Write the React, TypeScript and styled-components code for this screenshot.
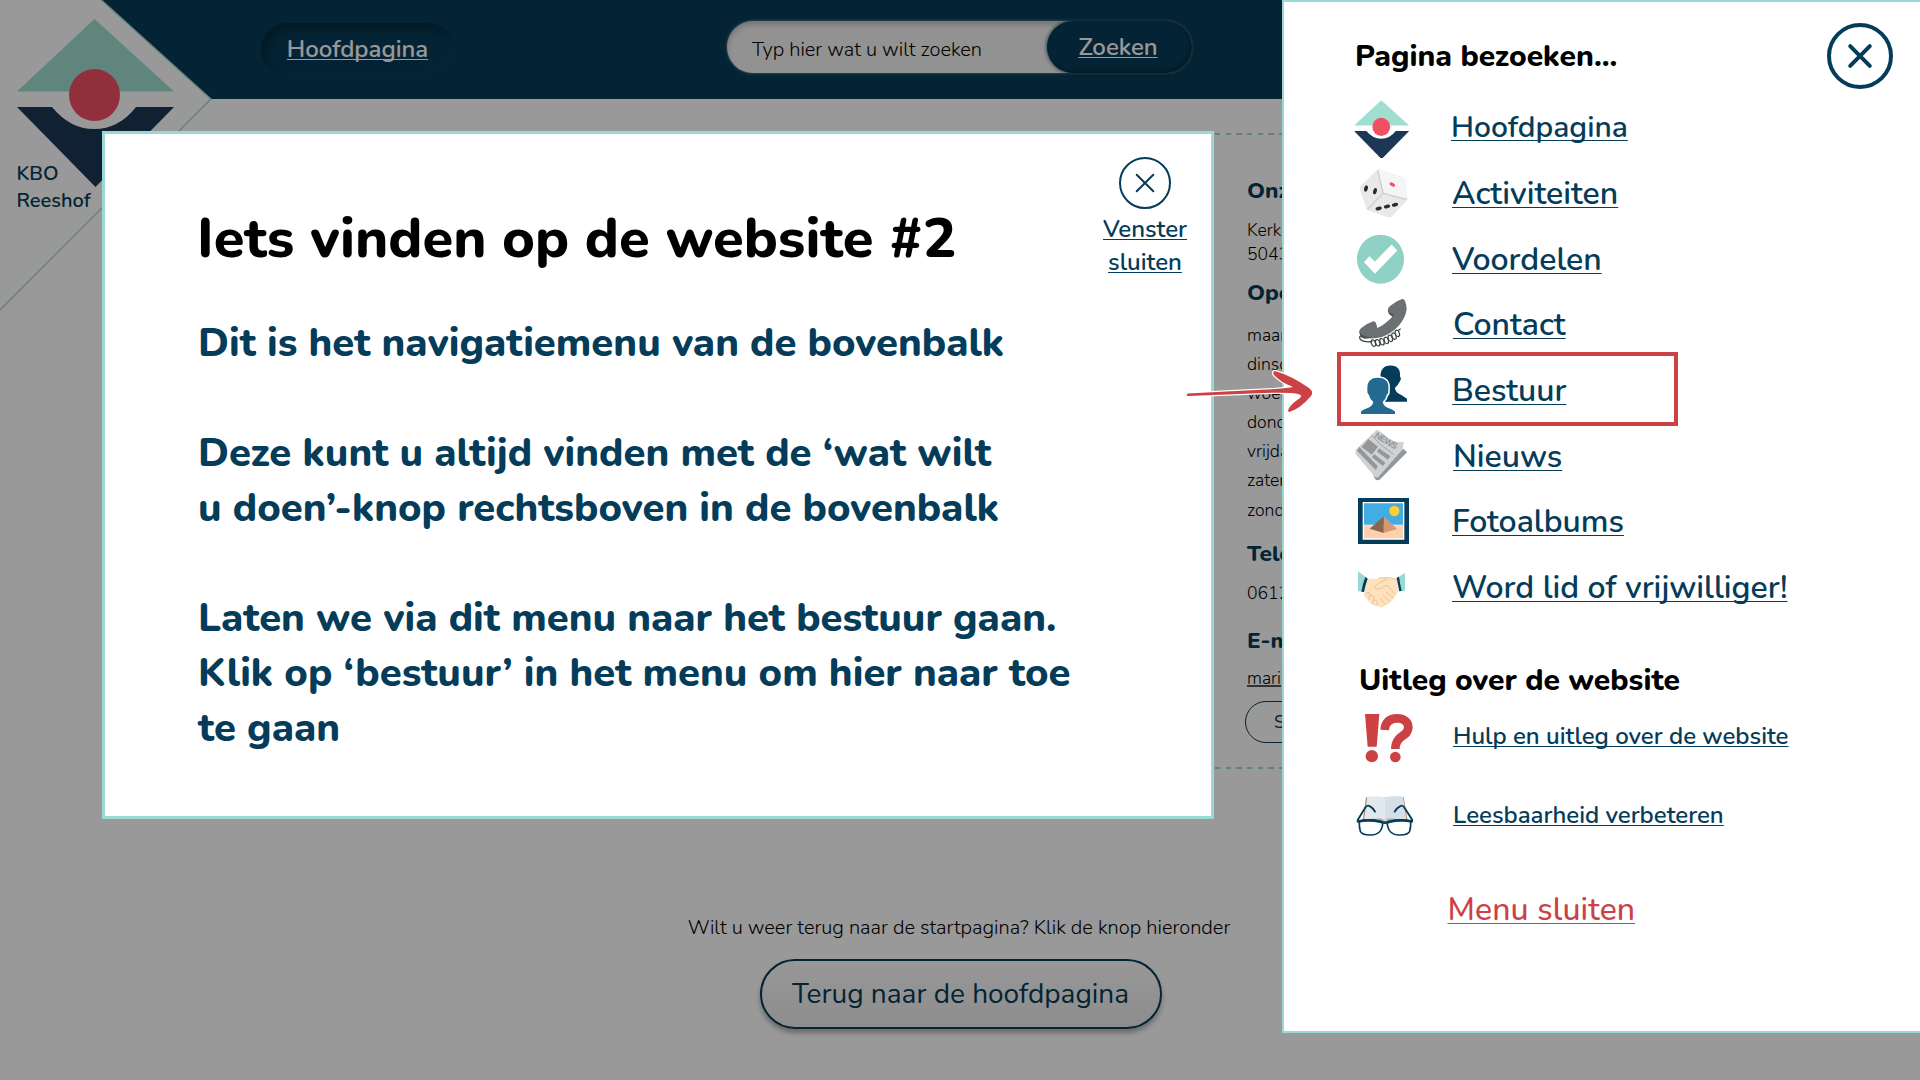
import React from "react";
import styled, { createGlobalStyle } from "styled-components";

const navy = "#043c5a";
const teal = "#9ad8d3";
const red = "#cc4244";

const GlobalStyle = createGlobalStyle`
  *, *::before, *::after { box-sizing: border-box; }
  body { margin: 0; background: #fff; overflow: hidden; }
  h1, h2, h3, p, ul { margin: 0; padding: 0; }
  ul { list-style: none; }
  button { border: 0; background: none; padding: 0; font: inherit; color: inherit; }
`;

const Screen = styled.div`
  position: relative;
  width: 1920px;
  height: 1080px;
  overflow: hidden;
  background: #fff;
  font-family: "Nunito", "Lato", sans-serif;
  color: #000;
`;

const Underlined = styled.a`
  text-decoration: underline;
  text-decoration-thickness: 1px;
  text-underline-offset: 2px;
  text-decoration-skip-ink: none;
  cursor: pointer;
`;

/* ---------- page behind the overlay ---------- */

const Header = styled.header`
  display: flex;
  height: 99px;
  padding-left: 261px;
  background: #073b57;
`;

const HomePill = styled(Underlined)`
  display: flex;
  align-items: center;
  justify-content: center;
  width: 193px;
  height: 52px;
  margin-top: 23px;
  border-radius: 26px;
  color: #fff;
  font-size: 24px;
  font-weight: 600;
  box-shadow: inset 6px 6px 10px #052b40, inset -6px -6px 10px #084160;
`;

const Search = styled.div`
  display: flex;
  width: 465px;
  height: 52px;
  margin: 21px 0 0 273px;
  border-radius: 26px;
  background: #f3f3f3;
  box-shadow: inset 0 4px 5px rgba(0, 0, 0, 0.18), 0 0 3px 0 rgba(255, 255, 255, 0.55);
`;

const SearchHint = styled.span`
  flex: 1;
  padding: 15px 0 0 25px;
  font-size: 20px;
  font-weight: 300;
  line-height: 27px;
`;

const SearchButton = styled.button`
  width: 145px;
  padding-right: 3px;
  border-radius: 26px;
  background: #073b57;
  color: #fff;
  font-size: 24px;
  font-weight: 600;
  box-shadow: inset -2px -2px 4px rgba(0, 0, 0, 0.25), 0 0 4px #073b57;
`;

const Corner = styled.div`
  position: absolute;
  left: 0;
  top: 0;
  width: 212px;
  height: 312px;
  svg { display: block; }
`;

const CornerName = styled.div`
  position: absolute;
  left: 16.5px;
  top: 160px;
  color: #073b57;
  font-size: 20px;
  font-weight: 600;
  line-height: 27px;
`;

const Card = styled.section`
  width: 1202px;
  height: 636px;
  margin: 34px 0 0 359px;
  padding: 41px 0 0 888px;
  --dash: repeating-linear-gradient(90deg, ${teal} 0 5.3px, transparent 5.3px 10.7px);
  background: var(--dash) top / 100% 2px no-repeat, var(--dash) bottom / 100% 2px no-repeat;
`;

const CardTitle = styled.h3<{ $top?: number }>`
  margin-top: ${p => p.$top ?? 0}px;
  color: #073b57;
  font-size: 22.6px;
  font-weight: 800;
  line-height: 33px;
`;

const CardText = styled.p<{ $top: number; $line?: number }>`
  margin-top: ${p => p.$top}px;
  font-size: 17.6px;
  font-weight: 300;
  line-height: ${p => p.$line ?? 24}px;
`;

const MailLink = styled(Underlined)`
  text-decoration-thickness: 2px;
  text-decoration-color: #555;
  text-underline-offset: 1px;
`;

const CardButton = styled.button`
  display: block;
  width: 190px;
  height: 42px;
  margin: 11.5px 0 0 -2px;
  padding-left: 28px;
  border: 1px solid #073b57;
  border-radius: 21px;
  color: #073b57;
  font-size: 18px;
  font-weight: 400;
  text-align: left;
`;

const Footer = styled.footer`
  display: flex;
  flex-direction: column;
  align-items: center;
  margin-top: 144.5px;
  padding-right: 2px;
  font-size: 20px;
  font-weight: 300;
  line-height: 27px;
`;

const BackButton = styled.button`
  width: 402px;
  height: 70px;
  margin: 18.5px 0 0 3px;
  border: 2px solid #073b57;
  border-radius: 35px;
  background: linear-gradient(#fdfdfd, #ebebeb);
  color: #073b57;
  font-size: 28px;
  font-weight: 400;
  box-shadow: 0 4px 5px rgba(0, 0, 0, 0.3);
`;

const Dim = styled.div`
  position: absolute;
  inset: 0;
  background: rgba(0, 0, 0, 0.4);
`;

/* ---------- dialog ---------- */

const Dialog = styled.section`
  position: absolute;
  left: 102px;
  top: 131px;
  display: flex;
  justify-content: space-between;
  width: 1112px;
  height: 688px;
  padding: 23px 22px 0 92px;
  border: 3px solid ${teal};
  background: #fff;
`;

const DialogBody = styled.div`
  padding-top: 44px;
  color: ${navy};
  font-size: 40px;
  font-weight: 800;
  line-height: 55px;
  p { margin: 0 0 55px 1px; white-space: nowrap; }
`;

const DialogTitle = styled.h1`
  margin-bottom: 39px;
  color: #000;
  font-size: 56px;
  font-weight: 800;
  line-height: 76px;
`;

const CloseLink = styled.a`
  display: flex;
  flex-direction: column;
  align-items: center;
  width: 88px;
  color: ${navy};
  font-size: 24px;
  font-weight: 600;
  line-height: 33px;
  cursor: pointer;
  svg { margin-bottom: 4px; }
`;

/* ---------- drawer ---------- */

const Drawer = styled.nav`
  position: absolute;
  left: 1282px;
  top: 0;
  width: 641px;
  height: 1033px;
  padding: 0 0 0 69px;
  border: 2px solid ${teal};
  background: #fff;
`;

const DrawerTop = styled.div`
  display: flex;
  justify-content: space-between;
  height: 93px;
  padding: 21px 28px 0 0;
`;

const DrawerTitle = styled.h2<{ $top: number; $left: number }>`
  margin: ${p => p.$top}px 0 0 ${p => p.$left}px;
  font-size: 30px;
  font-weight: 800;
  line-height: 41px;
`;

const PageList = styled.ul`
  display: grid;
  grid-auto-rows: 65.7px;
`;

const HelpList = styled.ul`
  display: grid;
  grid-auto-rows: 71px;
  row-gap: 8.3px;
`;

const Item = styled.li`
  display: grid;
  grid-template-columns: 99px auto;
  align-items: center;
  color: ${navy};
`;

const ItemLink = styled(Underlined)<{ $size: number; $nudge?: number }>`
  justify-self: start;
  margin-left: ${p => p.$nudge ?? 0}px;
  font-size: ${p => p.$size}px;
  font-weight: 600;
  white-space: nowrap;
  text-underline-offset: ${p => (p.$size > 24 ? 3 : 2)}px;
`;

const CloseMenu = styled(Underlined)`
  display: inline-block;
  margin: 37px 0 0 94.5px;
  color: ${red};
  font-size: 32px;
  font-weight: 500;
  line-height: 44px;
  letter-spacing: 0.08px;
  text-underline-offset: 3px;
`;

const Highlight = styled.div`
  position: absolute;
  left: 1337px;
  top: 352px;
  width: 341px;
  height: 74px;
  border: 4px solid ${red};
`;

const Arrow = styled.svg`
  position: absolute;
  left: 1180px;
  top: 360px;
`;

/* ---------- icons ---------- */

const Glyph = ({ y, children }: { y: number; children: React.ReactNode }) => (
  <svg width="60" height="60" viewBox={`99 ${y} 180 180`}>{children}</svg>
);

const Logo = () => (
  <>
    <path d="M94.5 19 174 91.5H17Z" fill="#a0ded0" />
    <path d="M17 107H52Q70 129 94 129Q119 129 136 107H174L95.5 187Z" fill="#1b3755" />
    <ellipse cx="94.5" cy="95" rx="25.5" ry="26" fill="#f34f64" />
  </>
);

const SmallLogo = () => (
  <svg width="60" height="60" viewBox="0 0 60 60">
    <g transform="translate(-4.9 -4.5) scale(.351)"><Logo /></g>
  </svg>
);

const Dice = () => (
  <Glyph y={220.5}>
    <path d="M172 238Q176 236 181 238L249 261Q255 263 256 269L262 322Q262 328 257 333L217 377Q211 382 204 380L149 362Q142 360 139 353L120 298Q118 291 123 285Z" fill="#e9e9e9" />
    <path d="M173 238Q176 236 181 238L249 261Q255 263 256 269L261 324L190 308Z" fill="#f5f5f5" />
    <path d="M173 239 189 308 142 357M190 309 261 327" fill="none" stroke="#d3d3d3" strokeWidth="5" strokeLinejoin="round" />
    <ellipse cx="217" cy="282" rx="9" ry="5.5" transform="rotate(30 217 282)" fill="#f34f64" />
    <g fill="#2c2c2c">
      <ellipse cx="138" cy="294" rx="5.5" ry="9.5" transform="rotate(14 138 294)" />
      <ellipse cx="165" cy="302" rx="5.5" ry="9.5" transform="rotate(14 165 302)" />
      <ellipse cx="176" cy="354" rx="9.5" ry="5.5" transform="rotate(-14 176 354)" />
      <ellipse cx="201" cy="348" rx="9.5" ry="5.5" transform="rotate(-14 201 348)" />
      <ellipse cx="225" cy="343" rx="9.5" ry="5.5" transform="rotate(-14 225 343)" />
    </g>
  </Glyph>
);

const Check = () => (
  <Glyph y={417.6}>
    <ellipse cx="181.5" cy="508" rx="70.5" ry="73.5" fill="#8fd1c5" />
    <path d="M132 517 148 499 165 515 215 464 232 482 165 552Z" fill="#fff" />
  </Glyph>
);

const Phone = () => (
  <Glyph y={614.7}>
    <path d="M118 728Q116 719 126 712Q142 699 158 694Q165 692 168 699L172 714Q194 704 221 676L204 664Q201 655 212 646Q229 632 247 627Q252 626 255 633Q260 645 260 658Q256 684 236 707Q209 738 170 744Q126 749 118 728Z" fill="#6b7073" />
    <path d="M118 724Q128 743 156 740Q136 752 121 740ZM204 658Q206 668 223 674L218 681L206 671Z" fill="#4b5054" />
    <path d="M120 738Q116 749 130 753Q144 757 157 754" fill="none" stroke="#3c4144" strokeWidth="4" />
    <g fill="none" stroke="#3c4144" strokeWidth="3.5">
      {[[160, 759], [173, 758], [186, 755], [199, 751], [211, 745], [222, 738], [232, 730]].map(([x, y]) => (
        <ellipse key={x} cx={x} cy={y} rx="6" ry="10" transform={`rotate(-20 ${x} ${y})`} />
      ))}
      <path d="M234 722 242 716" />
    </g>
  </Glyph>
);

const bust = "M123 221V213Q128 208 143 203Q158 197 160 184Q149 176 147 164Q141 160 142 150Q141 131 148 122Q156 112 173 112Q192 112 200 122Q207 131 205 150Q206 160 200 164Q198 176 188 184Q190 197 205 203Q220 208 225 213V221Z";

const People = () => (
  <Glyph y={61.8}>
    <path d="M194 184 182 118Q179 96 188 85Q196 75 211 75Q228 75 235 85Q241 92 240 108Q244 112 242 118Q240 124 237 126Q234 136 225 142Q226 154 237 160Q252 168 261 175V184Z" fill={navy} />
    <path d={bust} fill="#24698f" stroke="#fff" strokeWidth="9" paintOrder="stroke" />
    <path d="M110 222H240V232H110Z" fill="#fff" />
  </Glyph>
);

const News = () => (
  <Glyph y={259}>
    <path d="M250 327 261 338 181 418Q174 426 165 418L160 405Z" fill="#939799" />
    <path d="M170 270Q186 276 203 294Q224 309 251 307Q251 322 246 331L176 411Q172 416 165 412L107 343Q103 335 110 327Z" fill="#cfd1d2" />
    <g fill="#939799">
      <path d="M145 298 174 321 155 345 125 322Z" />
      <path d="M118 322 173 379 168 392 111 333Z" />
      <path d="M177 326 211 350 204 360 171 336ZM162 343 196 369 189 379 156 353Z" />
    </g>
    <path d="M155 287Q180 318 221 344" fill="none" stroke="#939799" strokeWidth="2.5" />
    <text x="162" y="292" transform="rotate(31 162 292)" fontFamily="Liberation Sans, sans-serif" fontWeight="700" fontSize="27" textLength="74" fill="#939799">NEWS</text>
  </Glyph>
);

const Photo = () => (
  <Glyph y={456}>
    <path d="M114 474H267V612H114Z" fill={navy} />
    <path d="M128 486H253V599H128Z" fill="#fff" />
    <path d="M132 490H249V554H132Z" fill="#43ade3" />
    <path d="M132 556H249V595H132Z" fill="#ffd0ae" />
    <circle cx="223" cy="513" r="15.5" fill="#ffce31" />
    <path d="M191 529 231 567 191 579Z" fill="#d39972" />
    <path d="M191 529V579L149 566Z" fill="#89664c" />
  </Glyph>
);

const Handshake = () => (
  <Glyph y={653}>
    <path d="M142 714Q160 718 178 713Q204 708 231 717L236 751Q230 764 222 771Q220 781 211 785Q207 793 198 794Q186 806 175 798Q163 800 158 791Q146 789 146 779Q135 776 134 764L132 753Z" fill="#ffe1bd" />
    <g fill="none" stroke="#e6b98f" strokeWidth="2.5" strokeLinecap="round">
      <path d="M178 713Q204 708 231 717M200 717Q180 722 165 738Q162 747 176 746Q189 744 195 736L206 737Q216 752 224 762" />
      <path d="M198 755 220 772M190 765 209 784M181 775 197 793M134 764Q140 756 147 756Q153 760 149 768Q156 763 162 769Q164 774 160 780Q168 777 172 784L172 794M146 779 149 768M158 791 160 780" />
    </g>
    <path d="M114 693 141 713 130 754 114 752Z" fill={teal} />
    <path d="M255 698 230 713 238 753 255 751Z" fill={teal} />
    <path d="M136 710 143 715Q136 734 132 755L124 754Q128 730 136 710ZM230 713 237 709Q240 730 245 751L238 753Q234 731 230 713Z" fill={navy} />
  </Glyph>
);

const Interrobang = () => (
  <Glyph y={198}>
    <g fill={red}>
      <path d="M135 222H178L170 320H143Z" />
      <circle cx="155.5" cy="348.5" r="18.5" />
      <circle cx="226" cy="351" r="16" />
    </g>
    <path d="M194 270C195 246 209 235 231 235C252 235 265 246 265 262C265 292 227 282 226 327" fill="none" stroke={red} strokeWidth="26" />
  </Glyph>
);

const Reading = () => (
  <Glyph y={436}>
    <path d="M138 473 128 543H263L251 473Z" fill="#b98a68" />
    <path d="M142 471Q170 468 195 473Q220 468 248 471L259 541Q222 532 195 543Q166 532 132 541Z" fill="#e1e9ef" />
    <path d="M195 473Q220 468 248 471L259 541Q222 532 195 543Z" fill="#d5dfe7" />
    <path d="M158 541Q180 530 195 542Q210 530 232 541Z" fill="#b3aca8" />
    <g fill="none" stroke={navy} strokeLinecap="round">
      <path d="M113 541 137 502Q143 495 150 500Q161 506 165 516M277 541 252 502Q246 495 240 500Q228 506 224 516" strokeWidth="5.5" />
      <path d="M118 544Q150 537 182 545Q190 548 187 560Q181 585 155 586Q125 587 121 575Q117 562 118 544ZM272 544Q240 537 208 545Q200 548 203 560Q209 585 235 586Q265 587 269 575Q273 562 272 544Z" fill="#fff" strokeWidth="5" />
      <path d="M114 545Q150 539 184 547Q195 551 206 547Q240 539 276 545" strokeWidth="8" />
    </g>
  </Glyph>
);

const CloseIcon = ({ size, stroke, arm, cross }: { size: number; stroke: number; arm: number; cross: number }) => {
  const c = size / 2;
  return (
    <svg width={size} height={size} fill="none" stroke={navy} strokeLinecap="round">
      <circle cx={c} cy={c} r={c - stroke / 2} strokeWidth={stroke} />
      <path d={`M${c - arm} ${c - arm}L${c + arm} ${c + arm}M${c + arm} ${c - arm}L${c - arm} ${c + arm}`} strokeWidth={cross} />
    </svg>
  );
};

/* ---------- content ---------- */

const pages = [
  { label: "Hoofdpagina", icon: SmallLogo, size: 30, nudge: -1 },
  { label: "Activiteiten", icon: Dice, size: 32 },
  { label: "Voordelen", icon: Check, size: 32 },
  { label: "Contact", icon: Phone, size: 32, nudge: 1 },
  { label: "Bestuur", icon: People, size: 32 },
  { label: "Nieuws", icon: News, size: 32, nudge: 1 },
  { label: "Fotoalbums", icon: Photo, size: 32 },
  { label: "Word lid of vrijwilliger!", icon: Handshake, size: 32 },
];

const days = ["maandag", "dinsdag", "woensdag", "donderdag", "vrijdag", "zaterdag", "zondag"];

export default function App() {
  return (
    <Screen>
      <GlobalStyle />
      <Header>
        <HomePill>Hoofdpagina</HomePill>
        <Search>
          <SearchHint>Typ hier wat u wilt zoeken</SearchHint>
          <SearchButton><Underlined as="span">Zoeken</Underlined></SearchButton>
        </Search>
      </Header>
      <Card>
        <CardTitle>Onze</CardTitle>
        <CardText $top={10.5}>Kerk<br />5043</CardText>
        <CardTitle $top={10.5}>Openingstijden</CardTitle>
        <CardText $top={12} $line={29.1}>
          {days.map(d => <React.Fragment key={d}>{d}<br /></React.Fragment>)}
        </CardText>
        <CardTitle $top={12}>Telefoon</CardTitle>
        <CardText $top={11}>0612</CardText>
        <CardTitle $top={19.5}>E-mail</CardTitle>
        <CardText $top={8.5}><MailLink>mari</MailLink></CardText>
        <CardButton>Stuur</CardButton>
      </Card>
      <Footer>
        Wilt u weer terug naar de startpagina? Klik de knop hieronder
        <BackButton>Terug naar de hoofdpagina</BackButton>
      </Footer>
      <Corner>
        <svg width="212" height="312">
          <path d="M0 0H101.5L211 99 0 310Z" fill="#fff" />
          <path d="M101.5 0 211 99 0 310" fill="none" stroke="#9bd6cf" strokeWidth="1.3" />
          <Logo />
        </svg>
        <CornerName>KBO<br />Reeshof</CornerName>
      </Corner>
      <Dim />

      <Dialog>
        <DialogBody>
          <DialogTitle>Iets vinden op de website #2</DialogTitle>
          <p>Dit is het navigatiemenu van de bovenbalk</p>
          <p>Deze kunt u altijd vinden met de ‘wat wilt<br />u doen’-knop rechtsboven in de bovenbalk</p>
          <p>Laten we via dit menu naar het bestuur gaan.<br />Klik op ‘bestuur’ in het menu om hier naar toe<br />te gaan</p>
        </DialogBody>
        <CloseLink>
          <CloseIcon size={52} stroke={2} arm={8.3} cross={2} />
          <Underlined as="span">Venster</Underlined>
          <Underlined as="span">sluiten</Underlined>
        </CloseLink>
      </Dialog>

      <Drawer>
        <DrawerTop>
          <DrawerTitle $top={13} $left={2}>Pagina bezoeken...</DrawerTitle>
          <CloseIcon size={66} stroke={4} arm={9.8} cross={4} />
        </DrawerTop>
        <PageList>
          {pages.map(({ label, icon: Icon, size, nudge }) => (
            <Item key={label}>
              <Icon />
              <ItemLink $size={size} $nudge={nudge}>{label}</ItemLink>
            </Item>
          ))}
        </PageList>
        <DrawerTitle $top={39} $left={6}>Uitleg over de website</DrawerTitle>
        <HelpList>
          <Item><Interrobang /><ItemLink $size={24} $nudge={1}>Hulp en uitleg over de website</ItemLink></Item>
          <Item><Reading /><ItemLink $size={24} $nudge={1}>Leesbaarheid verbeteren</ItemLink></Item>
        </HelpList>
        <CloseMenu>Menu sluiten</CloseMenu>
      </Drawer>

      <Highlight />
      <Arrow width="140" height="60">
        <path
          d="M8 33.5Q5 35 8 36L60 34Q90 32 112 33Q124 34 120 38Q108 46 108 51L109 52Q120 49 131 36Q134 32 129 28Q112 16 95 11Q92 12 94 15Q100 22 113 27Q108 28 95 29Q50 31 8 33.5Z"
          fill={red} stroke="#fff" strokeWidth="2.5" paintOrder="stroke" strokeLinejoin="round"
        />
      </Arrow>
    </Screen>
  );
}
